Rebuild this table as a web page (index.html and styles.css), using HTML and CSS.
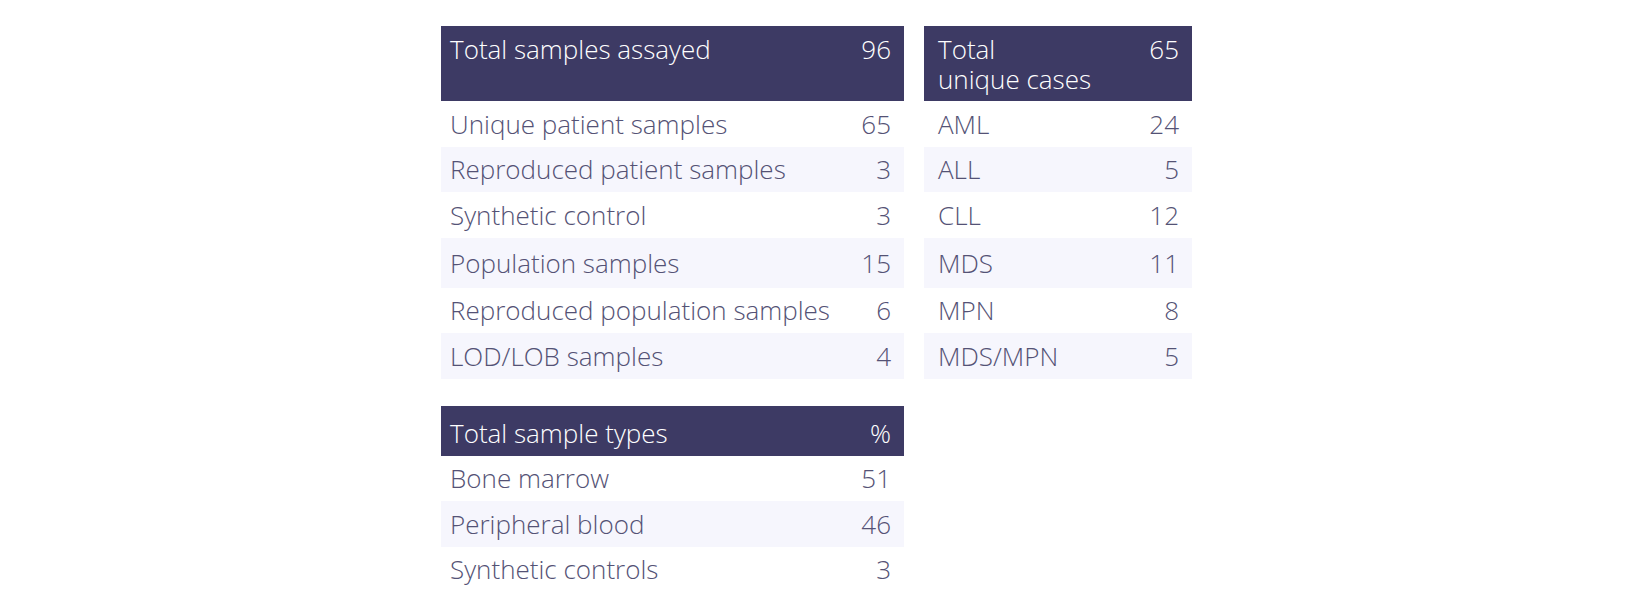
FILE: index.html
```html
<!DOCTYPE html>
<html lang="en">
<head>
<meta charset="utf-8">
<title>Samples</title>
<link rel="stylesheet" href="styles.css">
</head>
<body>
<div class="board">
  <div class="tbl tbl-main">
    <div class="head head-tall"><span class="label">Total samples assayed</span><span class="val">96</span></div>
    <div class="row"><span class="label">Unique patient samples</span><span class="val">65</span></div>
    <div class="row alt"><span class="label">Reproduced patient samples</span><span class="val">3</span></div>
    <div class="row"><span class="label">Synthetic control</span><span class="val">3</span></div>
    <div class="row alt row-tall"><span class="label">Population samples</span><span class="val">15</span></div>
    <div class="row"><span class="label">Reproduced population samples</span><span class="val">6</span></div>
    <div class="row alt"><span class="label">LOD/LOB samples</span><span class="val">4</span></div>
  </div>
  <div class="tbl tbl-cases">
    <div class="head head-tall"><span class="label">Total<br>unique cases</span><span class="val">65</span></div>
    <div class="row"><span class="label">AML</span><span class="val">24</span></div>
    <div class="row alt"><span class="label">ALL</span><span class="val">5</span></div>
    <div class="row"><span class="label">CLL</span><span class="val">12</span></div>
    <div class="row alt row-tall"><span class="label">MDS</span><span class="val">11</span></div>
    <div class="row"><span class="label">MPN</span><span class="val">8</span></div>
    <div class="row alt"><span class="label">MDS/MPN</span><span class="val">5</span></div>
  </div>
  <div class="tbl tbl-types">
    <div class="head head-short"><span class="label">Total sample types</span><span class="val">%</span></div>
    <div class="row"><span class="label">Bone marrow</span><span class="val">51</span></div>
    <div class="row alt"><span class="label">Peripheral blood</span><span class="val">46</span></div>
    <div class="row"><span class="label">Synthetic controls</span><span class="val">3</span></div>
  </div>
</div>
</body>
</html>
```

FILE: styles.css
```css
html, body {
  margin: 0;
  padding: 0;
  background: #ffffff;
}

body {
  font-family: "Open Sans", "Liberation Sans", sans-serif;
  font-weight: 300;
  font-size: 26px;
  color: #545275;
  font-variant-ligatures: none;
}

.board {
  display: grid;
  grid-template-columns: 463px 268px;
  column-gap: 20px;
  row-gap: 27px;
  justify-content: center;
  align-items: start;
  padding-top: 26px;
}

.tbl {
  display: flex;
  flex-direction: column;
}

.tbl-types {
  grid-column: 1;
}

.head {
  display: flex;
  justify-content: space-between;
  background: #3d3a64;
  color: #ffffff;
  padding: 0 13px 0 9px;
  line-height: 30px;
}

.head-tall {
  height: 75px;
  padding-top: 8px;
  box-sizing: border-box;
}

.head-short {
  height: 50px;
  align-items: center;
  padding-top: 4px;
  box-sizing: border-box;
}

.tbl-cases .head,
.tbl-cases .row {
  padding-left: 14px;
}

.row {
  display: flex;
  justify-content: space-between;
  align-items: center;
  height: 45.5px;
  padding: 0 13px 0 9px;
}

.row-tall {
  height: 50px;
}

.alt {
  background: #f6f6fd;
}

.val {
  text-align: right;
}
```
